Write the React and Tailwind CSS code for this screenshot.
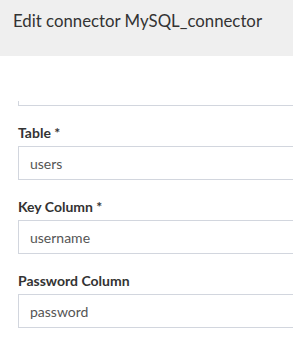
const fields = [
  { label: 'Table', required: true, value: 'users' },
  { label: 'Key Column', required: true, value: 'username' },
  { label: 'Password Column', required: false, value: 'password' },
];

export default function App() {
  return (
    <div className="h-[343px] w-[293px] overflow-hidden bg-white font-['Lato',sans-serif]">
      <div className="h-[56px] bg-[#efefef] pl-[13px] pt-[9px]">
        <h1 className="whitespace-nowrap text-[16.8px] leading-[24px] text-[#333]">Edit connector MySQL_connector</h1>
      </div>

      <div className="pl-[18px] pt-[45px]">
        <div className="h-[5px] w-[320px] border-x border-b border-[#d2d6de]" />

        {fields.map((f) => (
          <div key={f.label} className="mt-[15px]">
            <label className="block h-[25px] pt-[2px] text-[14px] font-bold leading-[20px] text-[#333]">
              {f.label}{f.required && ' *'}
            </label>
            <input
              readOnly
              value={f.value}
              className="block h-[34px] w-[320px] border border-[#d2d6de] px-[11px] text-[14px] text-[#555] outline-none"
            />
          </div>
        ))}
      </div>
    </div>
  );
}
